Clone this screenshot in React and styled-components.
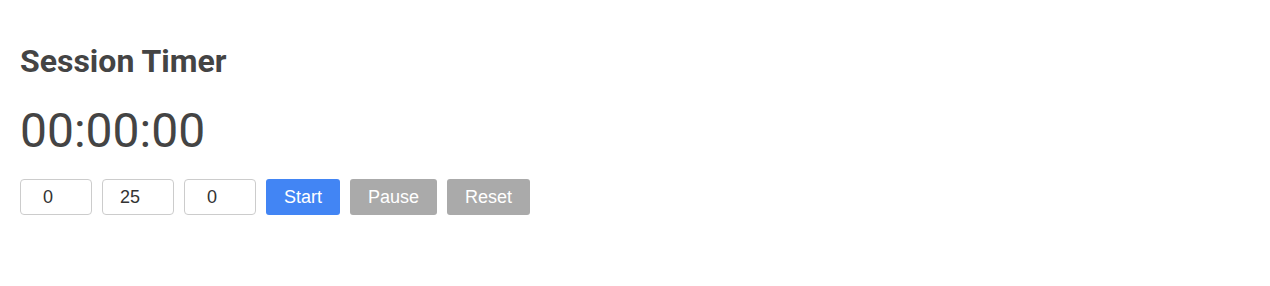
import React, { useState } from 'react';
import styled, { createGlobalStyle } from 'styled-components';

const GlobalStyle = createGlobalStyle`
  body {
    margin: 0;
    background: #ffffff;
    font-family: Roboto, "Liberation Sans", sans-serif;
  }
`;

const Wrapper = styled.div`
  padding: 20px;
  color: #444444;
`;

const Title = styled.h2`
  margin: 22px 0 0;
  font-size: 32px;
  font-weight: 700;
  line-height: 38px;
`;

const Clock = styled.div`
  margin-top: 23px;
  font-size: 48px;
  font-weight: 400;
  line-height: 56px;
`;

const Controls = styled.div`
  display: flex;
  gap: 10px;
  margin-top: 20px;
`;

const NumberInput = styled.input`
  width: 72px;
  height: 36px;
  box-sizing: border-box;
  padding: 0 16px 0 0;
  border: 1px solid #cccccc;
  border-radius: 4px;
  text-align: center;
  font-family: "Liberation Sans", Arial, sans-serif;
  font-size: 18px;
  color: #333333;
  outline: none;
  -moz-appearance: textfield;

  &::-webkit-inner-spin-button,
  &::-webkit-outer-spin-button {
    -webkit-appearance: none;
    margin: 0;
  }
`;

const Button = styled.button`
  height: 36px;
  padding: 0 18px;
  border: none;
  border-radius: 3px;
  background: ${(p) => (p.$primary ? '#4285f4' : '#aaaaaa')};
  color: #ffffff;
  font-family: "Liberation Sans", Arial, sans-serif;
  font-size: 18px;
  cursor: pointer;
`;

export default function App() {
  const [hours, setHours] = useState('0');
  const [minutes, setMinutes] = useState('25');
  const [seconds, setSeconds] = useState('0');

  return (
    <>
      <GlobalStyle />
      <Wrapper>
        <Title>Session Timer</Title>
        <Clock>00:00:00</Clock>
        <Controls>
          <NumberInput type="number" value={hours} onChange={(e) => setHours(e.target.value)} />
          <NumberInput type="number" value={minutes} onChange={(e) => setMinutes(e.target.value)} />
          <NumberInput type="number" value={seconds} onChange={(e) => setSeconds(e.target.value)} />
          <Button $primary>Start</Button>
          <Button>Pause</Button>
          <Button>Reset</Button>
        </Controls>
      </Wrapper>
    </>
  );
}
